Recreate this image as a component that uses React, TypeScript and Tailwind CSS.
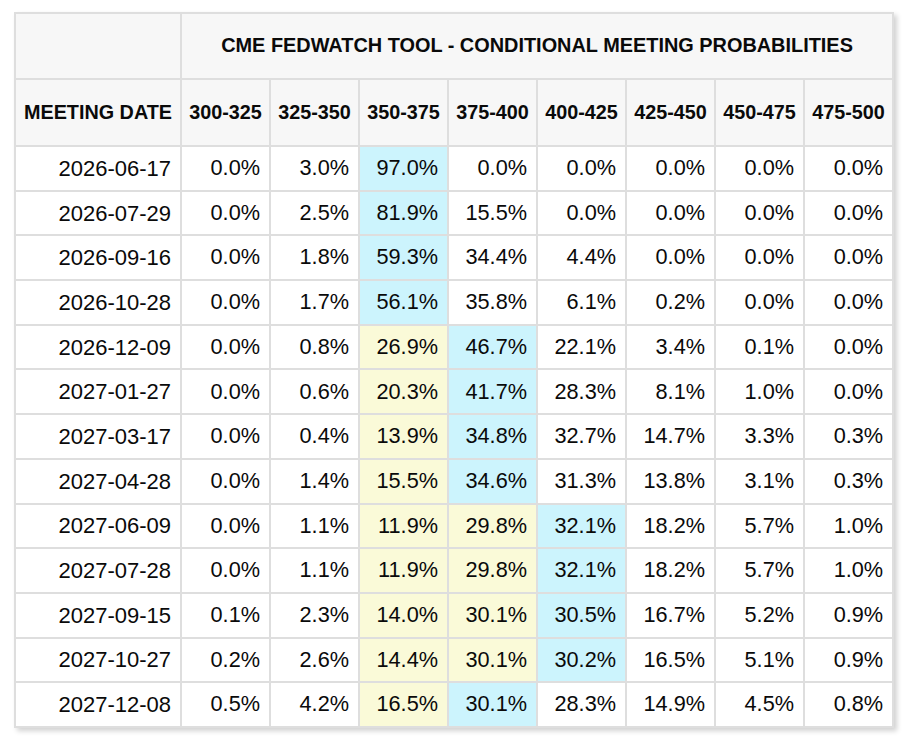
import React from "react";

type Mark = "c" | "y" | undefined;

const ranges = ["300-325", "325-350", "350-375", "375-400", "400-425", "425-450", "450-475", "475-500"];

// each row: date, values, and per-column highlight (c = cyan, y = yellow)
const rows: { date: string; vals: string[]; marks: Mark[] }[] = [
  { date: "2026-06-17", vals: ["0.0%", "3.0%", "97.0%", "0.0%", "0.0%", "0.0%", "0.0%", "0.0%"], marks: [, , "c"] },
  { date: "2026-07-29", vals: ["0.0%", "2.5%", "81.9%", "15.5%", "0.0%", "0.0%", "0.0%", "0.0%"], marks: [, , "c"] },
  { date: "2026-09-16", vals: ["0.0%", "1.8%", "59.3%", "34.4%", "4.4%", "0.0%", "0.0%", "0.0%"], marks: [, , "c"] },
  { date: "2026-10-28", vals: ["0.0%", "1.7%", "56.1%", "35.8%", "6.1%", "0.2%", "0.0%", "0.0%"], marks: [, , "c"] },
  { date: "2026-12-09", vals: ["0.0%", "0.8%", "26.9%", "46.7%", "22.1%", "3.4%", "0.1%", "0.0%"], marks: [, , "y", "c"] },
  { date: "2027-01-27", vals: ["0.0%", "0.6%", "20.3%", "41.7%", "28.3%", "8.1%", "1.0%", "0.0%"], marks: [, , "y", "c"] },
  { date: "2027-03-17", vals: ["0.0%", "0.4%", "13.9%", "34.8%", "32.7%", "14.7%", "3.3%", "0.3%"], marks: [, , "y", "c"] },
  { date: "2027-04-28", vals: ["0.0%", "1.4%", "15.5%", "34.6%", "31.3%", "13.8%", "3.1%", "0.3%"], marks: [, , "y", "c"] },
  { date: "2027-06-09", vals: ["0.0%", "1.1%", "11.9%", "29.8%", "32.1%", "18.2%", "5.7%", "1.0%"], marks: [, , "y", "y", "c"] },
  { date: "2027-07-28", vals: ["0.0%", "1.1%", "11.9%", "29.8%", "32.1%", "18.2%", "5.7%", "1.0%"], marks: [, , "y", "y", "c"] },
  { date: "2027-09-15", vals: ["0.1%", "2.3%", "14.0%", "30.1%", "30.5%", "16.7%", "5.2%", "0.9%"], marks: [, , "y", "y", "c"] },
  { date: "2027-10-27", vals: ["0.2%", "2.6%", "14.4%", "30.1%", "30.2%", "16.5%", "5.1%", "0.9%"], marks: [, , "y", "y", "c"] },
  { date: "2027-12-08", vals: ["0.5%", "4.2%", "16.5%", "30.1%", "28.3%", "14.9%", "4.5%", "0.8%"], marks: [, , "y", "c"] },
];

function cellBg(m: Mark) {
  if (m === "c") return "bg-[#ccf4fd]";
  if (m === "y") return "bg-[#fafad8]";
  return "bg-white";
}

export default function App() {
  return (
    <div className="min-h-[740px] bg-white pl-[14px] pt-[12px] font-['Liberation_Sans',Arial,sans-serif] text-[#0a0a0a]">
      <table className="w-[878px] table-fixed border-collapse border-2 border-[#dedede] shadow-[3px_3px_5px_rgba(0,0,0,0.18)]">
        <colgroup>
          <col className="w-[166px]" />
          {ranges.map((r) => (
            <col key={r} className="w-[89px]" />
          ))}
        </colgroup>
        <thead className="bg-[#f7f7f7]">
          <tr className="h-[66px]">
            <th className="border-2 border-[#dedede]" />
            <th colSpan={8} className="border-2 border-[#dedede] text-center text-[19.9px] font-bold">
              CME FEDWATCH TOOL - CONDITIONAL MEETING PROBABILITIES
            </th>
          </tr>
          <tr className="h-[67px]">
            <th className="border-2 border-[#dedede] text-center text-[19.8px] font-bold whitespace-nowrap">MEETING DATE</th>
            {ranges.map((r) => (
              <th key={r} className="border-2 border-[#dedede] text-center text-[19.8px] font-bold whitespace-nowrap">
                {r}
              </th>
            ))}
          </tr>
        </thead>
        <tbody>
          {rows.map((row) => (
            <tr key={row.date} className="h-[44.7px]">
              <td className="border-2 border-[#dedede] bg-white pr-[9px] text-right text-[22px]">{row.date}</td>
              {row.vals.map((v, i) => (
                <td
                  key={i}
                  className={`border-2 border-[#dedede] ${cellBg(row.marks[i])} pr-[9px] text-right text-[21.7px]`}
                >
                  {v}
                </td>
              ))}
            </tr>
          ))}
        </tbody>
      </table>
    </div>
  );
}
